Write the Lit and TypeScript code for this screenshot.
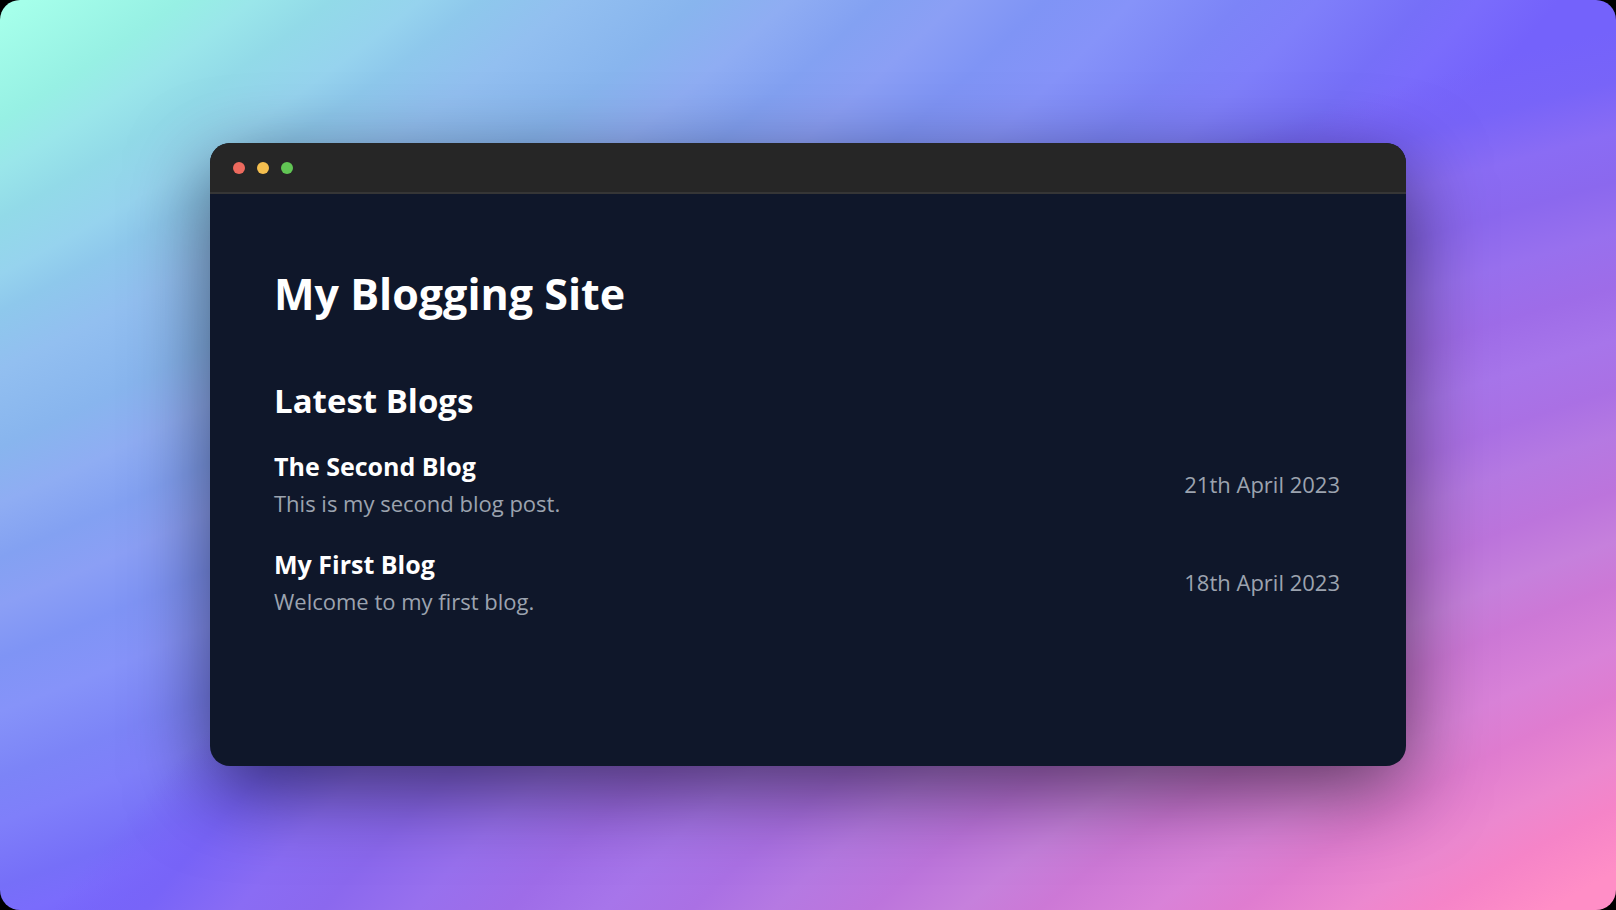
import { LitElement, html, css } from "lit";
import { customElement } from "lit/decorators.js";

interface Post { title: string; summary: string; date: string; }

const posts: Post[] = [
  { title: "The Second Blog", summary: "This is my second blog post.", date: "21th April 2023" },
  { title: "My First Blog", summary: "Welcome to my first blog.", date: "18th April 2023" },
];

@customElement("app-root")
export class AppRoot extends LitElement {
  static styles = css`
    :host { display: block; background: #000; font-family: "Segoe UI", "Open Sans", "Noto Sans", sans-serif; }
    .backdrop {
      box-sizing: border-box; min-height: 100vh; padding: 143px 210px 144px; border-radius: 20px;
      display: flex; flex-direction: column;
      /* violet-to-pink sweep from the lower right, over a mint-to-violet sweep from the upper left */
      background:
        radial-gradient(200% 200% at 170% 170%,
          #ff8ec6 51%, #f584c8 53.7%, #ec88cf 55.6%, #df7cd0 58.4%, #d982d8 60.5%, #cc78d6 63.4%,
          #c680dc 65.4%, #bc74dc 67.8%, #b579e2 70.4%, #aa70e4 72.6%, #a775ea 75%, #9e6ce8 77.6%,
          #9870ee 80.2%, #8b68ee 82.8%, #8a6cf4 85.2%, #7864f8 87.8%, rgb(120 100 250 / 0) 90.5%),
        radial-gradient(300% 300% at -120% -100%,
          #a5ffea 52.5%, #97f0e4 55%, #9ae6ea 56.2%, #92dae8 57.5%, #96d3ee 59%, #8ec8ec 60%,
          #92bff0 61.6%, #88b5ee 63.8%, #8fadf3 65.4%, #83a1f2 67%, #8b9ff5 68.4%, #7f94f5 70%,
          #8693f9 71.6%, #7c84f7 73.6%, #7f7ffa 75%, #766ff8 77%, #7a6cfc 78%, #7462fb 79.5%);
    }
    .window {
      flex: 1; display: flex; flex-direction: column; overflow: hidden; border-radius: 20px;
      background: #0f172a; box-shadow: 0 24px 80px rgb(0 0 0 / 0.55);
    }
    .titlebar { display: flex; gap: 12px; padding: 19px 23px 18px; background: #262626; border-bottom: 2px solid #363636; }
    .dot { width: 12px; height: 12px; border-radius: 50%; }
    .close { background: #ed6a5e; } .minimize { background: #f5bf4f; } .maximize { background: #61c554; }
    .content { padding: 70px 66px 48px 64px; color: #fff; }
    h1, h2, h3, p, ul { margin: 0; padding: 0; }
    h1 { font-size: 43px; line-height: 60px; font-weight: 700; }
    h2 { margin-top: 53px; font-size: 33px; line-height: 48px; font-weight: 700; }
    ul { list-style: none; margin-top: 22px; display: grid; gap: 24px; }
    .post { display: flex; justify-content: space-between; align-items: center; }
    h3 { font-size: 25px; line-height: 38px; font-weight: 700; }
    .summary, time { font-size: 22px; line-height: 36px; color: #9ca3af; }
  `;

  render() {
    return html`
      <div class="backdrop">
        <main class="window">
          <div class="titlebar">
            <span class="dot close"></span><span class="dot minimize"></span><span class="dot maximize"></span>
          </div>
          <div class="content">
            <h1>My Blogging Site</h1>
            <h2>Latest Blogs</h2>
            <ul>
              ${posts.map((p) => html`
                <li class="post">
                  <div><h3>${p.title}</h3><p class="summary">${p.summary}</p></div>
                  <time>${p.date}</time>
                </li>`)}
            </ul>
          </div>
        </main>
      </div>`;
  }
}
